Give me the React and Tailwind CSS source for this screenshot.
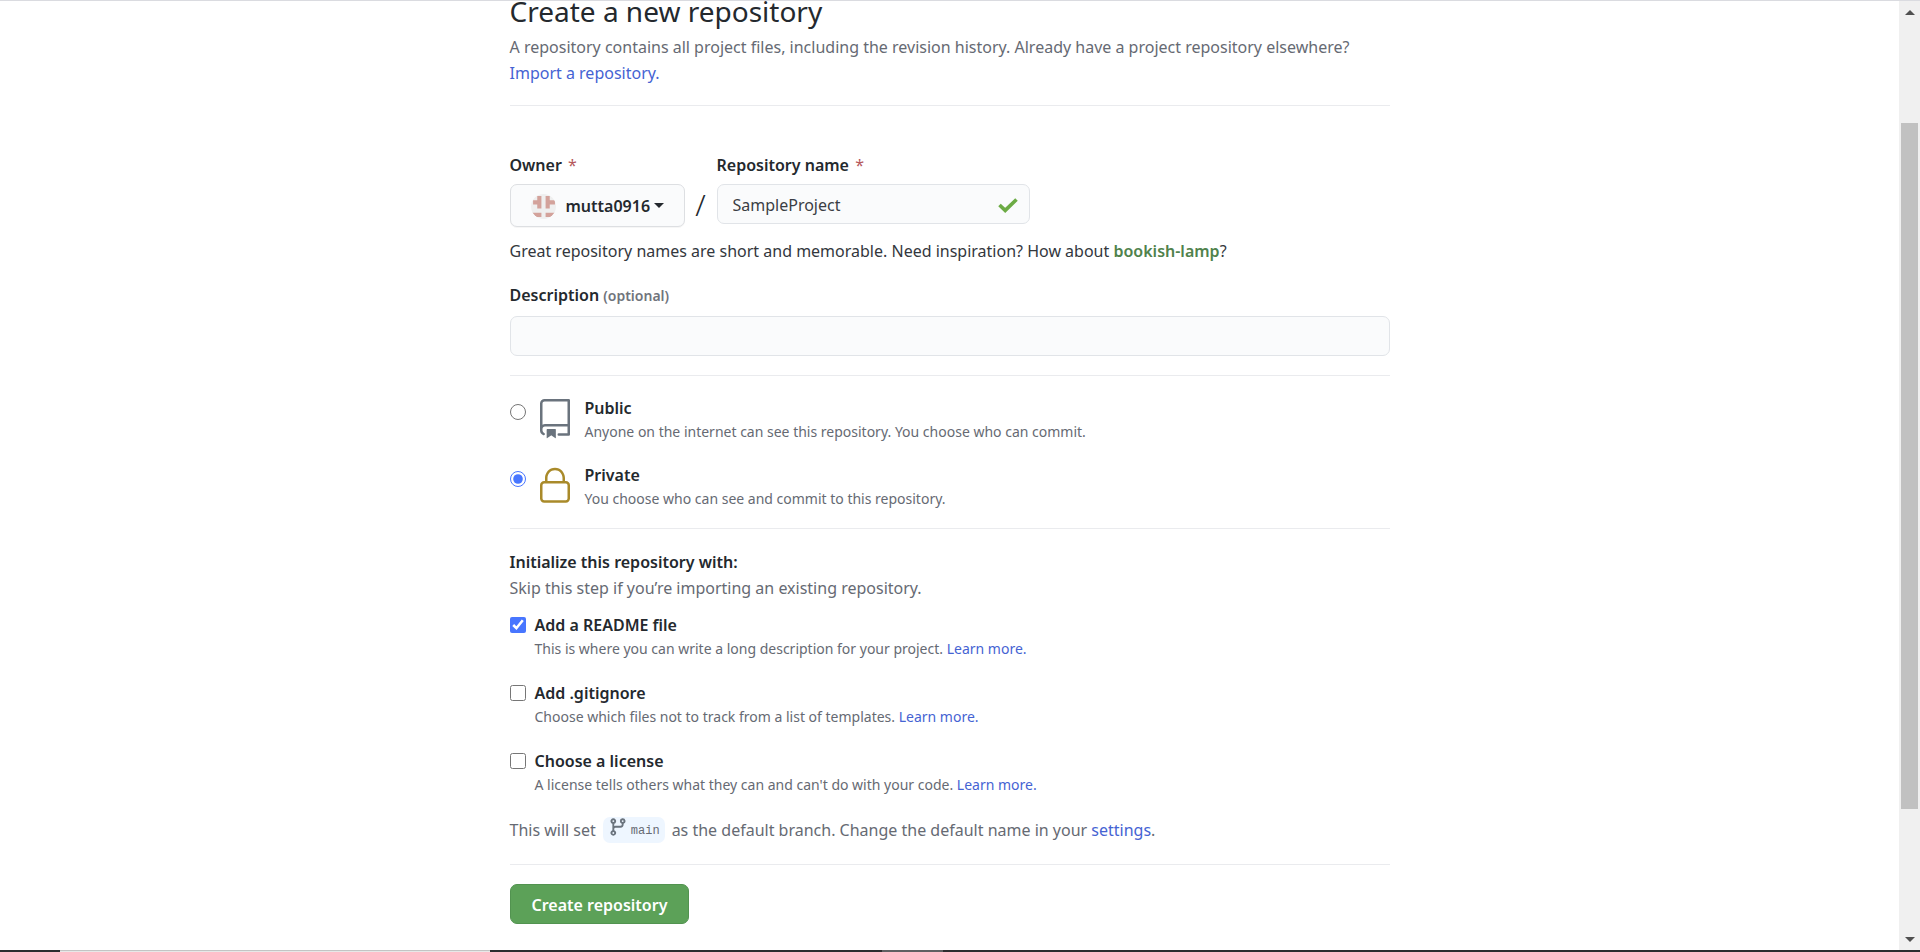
import React, { useState } from "react";

const BRANCH =
  "M11.75 2.5a.75.75 0 100 1.5.75.75 0 000-1.5zm-2.25.75a2.25 2.25 0 113 2.122V6A2.5 2.5 0 0110 8.5H6a1 1 0 00-1 1v1.128a2.251 2.251 0 11-1.5 0V5.372a2.25 2.25 0 111.5 0v1.836A2.492 2.492 0 016 7h4a1 1 0 001-1v-.628A2.25 2.25 0 019.5 3.25zM4.25 12a.75.75 0 100 1.5.75.75 0 000-1.5zM3.5 3.25a.75.75 0 111.5 0 .75.75 0 01-1.5 0z";

function RepoIcon() {
  return (
    <svg viewBox="0 0 24 24" className="size-10 fill-[#6a737d]" aria-hidden="true">
      <path
        fillRule="evenodd"
        d="M3 2.75A2.75 2.75 0 015.75 0h14.5a.75.75 0 01.75.75v20.5a.75.75 0 01-.75.75h-6a.75.75 0 010-1.5h5.25v-4H6A1.5 1.5 0 004.5 18v.75c0 .716.43 1.334 1.05 1.605a.75.75 0 01-.6 1.374A3.25 3.25 0 013 18.75v-16zM19.5 1.5V15H6c-.546 0-1.059.146-1.5.401V2.75c0-.69.56-1.25 1.25-1.25H19.5z"
      />
      <path d="M7 18.25a.25.25 0 01.25-.25h5a.25.25 0 01.25.25v5.01a.25.25 0 01-.397.201l-2.206-1.604a.25.25 0 00-.294 0L7.397 23.46a.25.25 0 01-.397-.2v-5.01z" />
    </svg>
  );
}

function LockIcon() {
  return (
    <svg viewBox="0 0 24 24" className="size-10 fill-[#a98a2a]" aria-hidden="true">
      <path
        fillRule="evenodd"
        d="M6 9V7.25C6 3.845 8.503 1 12 1s6 2.845 6 6.25V9h.5a2.5 2.5 0 012.5 2.5v8a2.5 2.5 0 01-2.5 2.5h-13A2.5 2.5 0 013 19.5v-8A2.5 2.5 0 015.5 9H6zm1.5-1.75C7.5 4.58 9.422 2.5 12 2.5c2.578 0 4.5 2.08 4.5 4.75V9h-9V7.25zm-3 4.25a1 1 0 011-1h13a1 1 0 011 1v8a1 1 0 01-1 1h-13a1 1 0 01-1-1v-8z"
      />
    </svg>
  );
}

function Avatar() {
  return (
    <svg viewBox="0 0 24 24" className="mt-0.5 size-[25px] rounded-full bg-[#efefef] fill-[#d3a29b]" aria-hidden="true">
      <path d="M6 2h4v12H6v-4H2V6h4zM14 2h4v4h5v4h-5v4h-4zM1 18h9v4H5zM14 18h9l-4 4h-5z" />
    </svg>
  );
}

function Rule({ className }) {
  return <hr className={`border-[#eaebee] ${className}`} />;
}

function Link({ children }) {
  return (
    <a href="#" className="text-[#4563d3]">
      {children}
    </a>
  );
}

function Visibility({ id, title, text, icon, checked, onChange }) {
  return (
    <div className="flex">
      <input
        type="radio"
        name="visibility"
        id={id}
        checked={checked}
        onChange={onChange}
        className="mt-2 size-4 accent-[#4876ff]"
      />
      <div className="mt-[3px] ml-[9px]">{icon}</div>
      <label htmlFor={id} className="ml-[10px]">
        <span className="block leading-6 font-semibold text-[#24292e]">{title}</span>
        <span className="block text-[14px] leading-6 text-[#666a73]">{text}</span>
      </label>
    </div>
  );
}

function Option({ id, title, text, defaultChecked }) {
  return (
    <div className="flex gap-[9px]">
      <input
        type="checkbox"
        id={id}
        defaultChecked={defaultChecked}
        className="mt-1 size-4 accent-[#4876ff]"
      />
      <div>
        <label htmlFor={id} className="block leading-6 font-semibold text-[#24292e]">
          {title}
        </label>
        <p className="text-[14px] leading-6 text-[#666a73]">
          {text} <Link>Learn more.</Link>
        </p>
      </div>
    </div>
  );
}

function ScrollBar() {
  return (
    <div className="flex w-[21px] flex-col items-center bg-[#f0f0f0]" aria-hidden="true">
      <div className="flex h-[122px] flex-col pt-[9px]">
        <svg viewBox="0 0 10 5" className="h-[5px] w-[10px] fill-[#505050]">
          <path d="M0 5L5 0l5 5z" />
        </svg>
      </div>
      <div className="w-[17px] grow bg-[#c1c1c1]" />
      <div className="flex h-[141px] flex-col justify-end pb-2">
        <svg viewBox="0 0 10 5" className="h-[5px] w-[10px] fill-[#505050]">
          <path d="M0 0l5 5 5-5z" />
        </svg>
      </div>
    </div>
  );
}

export default function App() {
  const [visibility, setVisibility] = useState("private");
  return (
    <div className="flex min-h-screen flex-col overflow-hidden border-t border-[#dadbe0] bg-white font-['Noto_Sans','Open_Sans',sans-serif] text-[16px] leading-[26px] text-[#24292e]">
      <div className="flex grow">
        <main className="grow">
          <div className="mx-auto w-full max-w-[880px]">
            <h1 className="-mt-[10px] text-[28px] leading-10">Create a new repository</h1>
            <p className="mt-[3px] text-[#666a73]">
              A repository contains all project files, including the revision history. Already have a
              project repository elsewhere? <Link>Import a repository.</Link>
            </p>
            <Rule className="mt-[19px]" />

            <form onSubmit={(e) => e.preventDefault()}>
              <div className="mt-[46px] flex">
                <div>
                  <label htmlFor="owner" className="block font-semibold">
                    Owner <span className="ml-0.5 font-normal text-[#b5585c]">*</span>
                  </label>
                  <button
                    id="owner"
                    type="button"
                    className="mt-1.5 flex h-[43px] w-[175px] items-center rounded-[7px] border border-[#dddfe2] bg-[#fafbfc] pl-5 font-semibold shadow-[0_1px_0_rgba(27,31,35,0.04)]"
                  >
                    <Avatar />
                    <span className="ml-2.5">mutta0916</span>
                    <svg viewBox="0 0 10 5" className="ml-1 h-[5px] w-[10px] fill-[#24292e]" aria-hidden="true">
                      <path d="M0 0l5 5 5-5z" />
                    </svg>
                  </button>
                </div>
                <span className="mt-9 w-8 text-center text-[30px] leading-[34px] font-light">/</span>
                <div>
                  <label htmlFor="repo" className="block font-semibold">
                    Repository name <span className="ml-0.5 font-normal text-[#b5585c]">*</span>
                  </label>
                  <div className="relative mt-1.5">
                    <input
                      id="repo"
                      type="text"
                      defaultValue="SampleProject"
                      className="block h-10 w-[313px] rounded-[7px] border border-[#e1e4e8] bg-[#fafbfc] px-[15px] pt-0.5 text-[#3a3e44]"
                    />
                    <svg viewBox="0 0 20 16" className="absolute top-[13px] right-3 h-4 w-5" aria-hidden="true">
                      <path d="M1.5 8L7.2 13.4 18.5 2.5" fill="none" stroke="#6cab45" strokeWidth="3.6" />
                    </svg>
                  </div>
                </div>
              </div>
              <p className="mt-[11px] text-[#33373d]">
                Great repository names are short and memorable. Need inspiration? How about{" "}
                <strong className="font-semibold text-[#50824c]">bookish-lamp</strong>?
              </p>

              <label htmlFor="description" className="mt-[18px] block font-semibold">
                Description <span className="text-[14px] font-semibold text-[#70747c]">(optional)</span>
              </label>
              <input
                id="description"
                type="text"
                className="mt-[7px] block h-10 w-full rounded-[7px] border border-[#e1e4e8] bg-[#fafbfc] px-[15px]"
              />

              <Rule className="mt-[19px]" />
              <div className="mt-5 flex flex-col gap-[19px]">
                <Visibility
                  id="public"
                  title="Public"
                  text="Anyone on the internet can see this repository. You choose who can commit."
                  icon={<RepoIcon />}
                  checked={visibility === "public"}
                  onChange={() => setVisibility("public")}
                />
                <Visibility
                  id="private"
                  title="Private"
                  text="You choose who can see and commit to this repository."
                  icon={<LockIcon />}
                  checked={visibility === "private"}
                  onChange={() => setVisibility("private")}
                />
              </div>

              <Rule className="mt-[17px]" />
              <h2 className="mt-5 font-semibold">Initialize this repository with:</h2>
              <p className="text-[#666a73]">Skip this step if you’re importing an existing repository.</p>
              <div className="mt-3 flex flex-col gap-5">
                <Option
                  id="readme"
                  title="Add a README file"
                  text="This is where you can write a long description for your project."
                  defaultChecked
                />
                <Option
                  id="gitignore"
                  title="Add .gitignore"
                  text="Choose which files not to track from a list of templates."
                />
                <Option
                  id="license"
                  title="Choose a license"
                  text="A license tells others what they can and can't do with your code."
                />
              </div>
              <p className="mt-5 flex items-center text-[#666a73]">
                This will set
                <span className="mx-[7px] flex items-center gap-[3px] rounded-[7px] bg-[#eef6ff] px-[5px]">
                  <svg viewBox="0 0 16 16" className="mb-1.5 size-5 fill-[#6a737d]" aria-hidden="true">
                    <path fillRule="evenodd" d={BRANCH} />
                  </svg>
                  <code className="pt-0.5 font-['Liberation_Mono',monospace] text-[12px] leading-6">main</code>
                </span>
                <span>
                  as the default branch. Change the default name in your <Link>settings</Link>.
                </span>
              </p>
              <Rule className="mt-[21px]" />
              <button
                type="submit"
                className="mt-[19px] h-10 rounded-[7px] border border-[#529350] bg-[#5ca158] px-[21px] pt-0.5 font-semibold text-white"
              >
                Create repository
              </button>
            </form>
          </div>
        </main>
        <ScrollBar />
      </div>
      <div className="flex h-[2px] bg-[#2d2d2f]" aria-hidden="true">
        <div className="ml-[60px] w-[430px] border-t border-[#c4c4c4] bg-[#e8e8e8]" />
        <div className="ml-[392px] w-[61px] bg-[#606062]" />
      </div>
    </div>
  );
}
